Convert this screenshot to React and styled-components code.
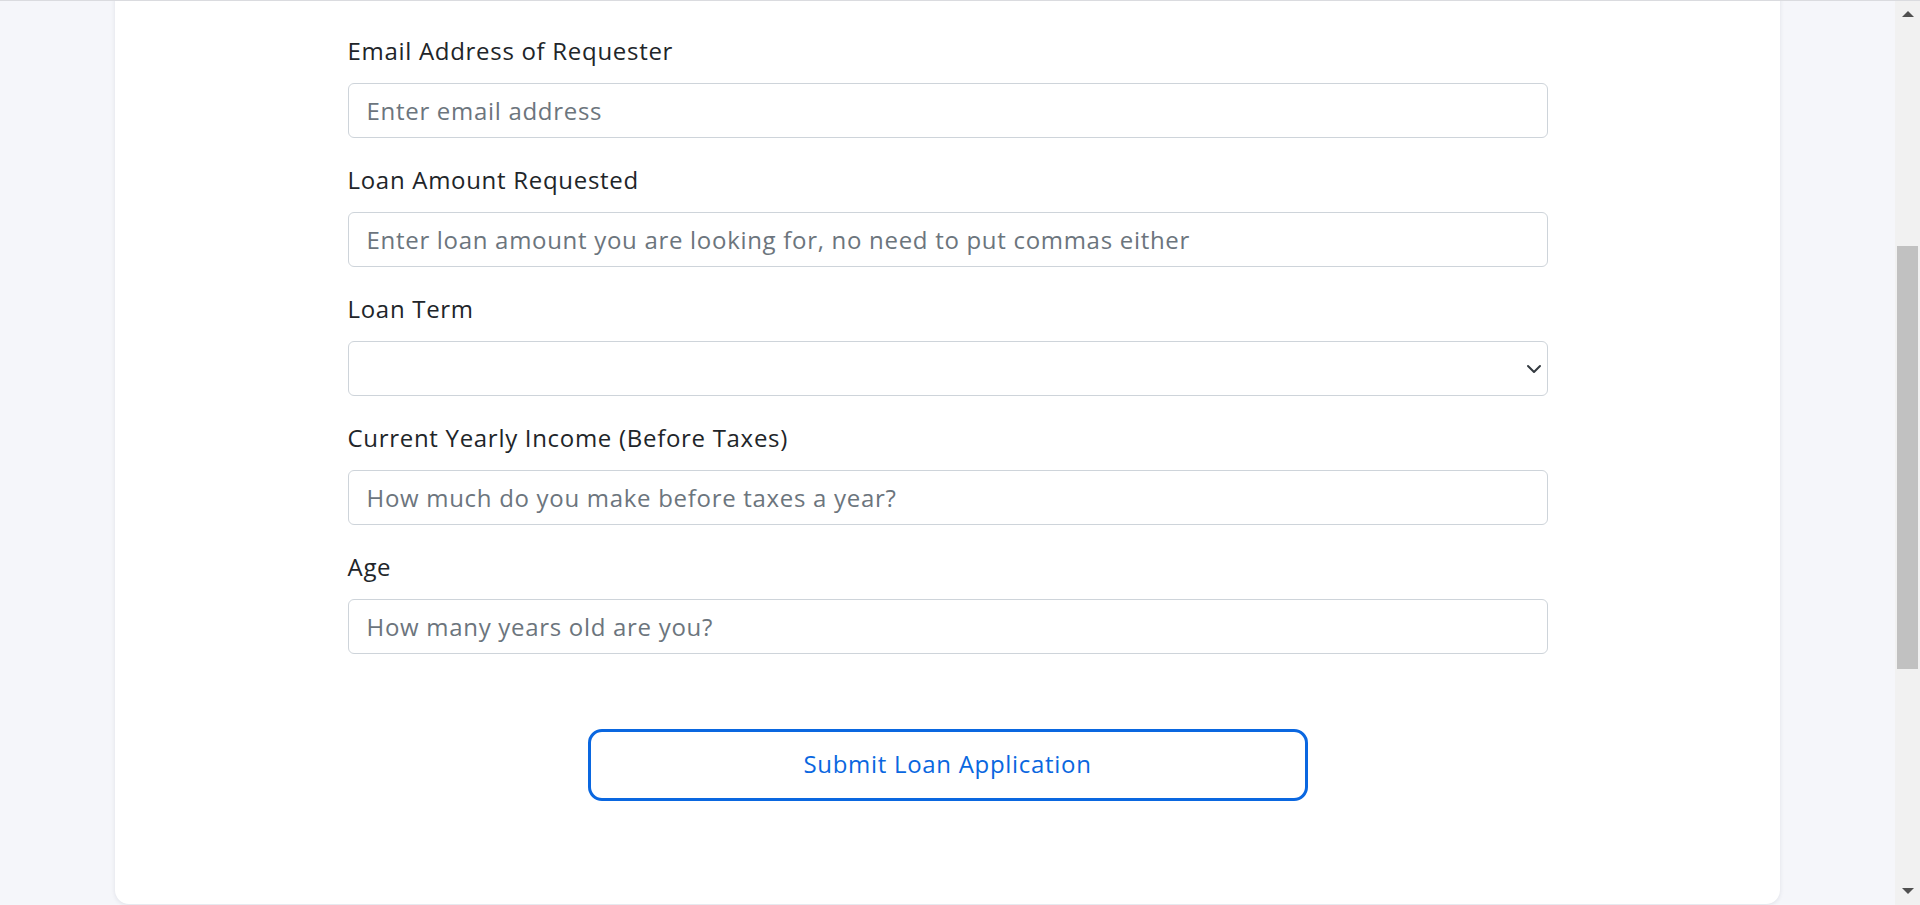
import styled, { createGlobalStyle } from "styled-components"

const FONT = `"Open Sans", "Liberation Sans", sans-serif`

const Global = createGlobalStyle`
  html, body {
    margin: 0;
    padding: 0;
    overflow: hidden;
  }
  body {
    font-family: ${FONT};
    background: #f5f6fa;
  }
  * {
    box-sizing: border-box;
  }
`

const Viewport = styled.div`
  display: flex;
  height: 905px;
  border-top: 1px solid #dadbdf;
  overflow: hidden;
`
const Main = styled.main`
  flex: 1;
  overflow: hidden;
  background: #f5f6fa;
  padding: 0 115px;
`
const Card = styled.section`
  margin-top: -60px;
  padding: 96px 0 103px;
  background: #fff;
  border-radius: 14px;
  box-shadow: 0 1px 4px rgba(30, 40, 70, 0.1);
`
const Form = styled.form`
  width: 1200px;
  margin: 0 auto;
  display: flex;
  flex-direction: column;
  align-items: center;
`
const Field = styled.div`
  width: 100%;
  margin-bottom: 28px;
`
const Label = styled.label`
  display: block;
  font-size: 24px;
  letter-spacing: 0.7px;
  line-height: 28px;
  color: #212529;
  margin-bottom: 18px;
`
const Input = styled.input`
  display: block;
  width: 100%;
  height: 55px;
  padding: 0 18px;
  font-family: ${FONT};
  font-size: 24px;
  letter-spacing: 0.7px;
  color: #212529;
  background: #fff;
  border: 1px solid #ced4da;
  border-radius: 6px;
  outline: none;
  &::placeholder {
    color: #6c757d;
  }
`
const SelectWrap = styled.div`
  position: relative;
`
const Select = styled.select`
  display: block;
  width: 100%;
  height: 55px;
  padding: 0 18px;
  font-family: ${FONT};
  font-size: 24px;
  background: #fff;
  border: 1px solid #ced4da;
  border-radius: 6px;
  appearance: none;
  outline: none;
`
const Chevron = styled.svg`
  position: absolute;
  right: 6px;
  top: 50%;
  width: 16px;
  height: 16px;
  margin-top: -8px;
  pointer-events: none;
`
const Submit = styled.button`
  width: 720px;
  height: 72px;
  margin-top: 47px;
  padding: 0 0 3px;
  background: #fff;
  border: 3px solid #0a67e0;
  border-radius: 14px;
  color: #0a67e0;
  font-family: ${FONT};
  font-size: 24px;
  letter-spacing: 0.7px;
  cursor: pointer;
`
const Scrollbar = styled.div`
  width: 25px;
  background: #f1f1f1;
  display: flex;
  flex-direction: column;
  align-items: center;
`
const Arrow = styled.div`
  width: 0;
  height: 0;
  border-left: 6px solid transparent;
  border-right: 6px solid transparent;
  ${(p) =>
    p.down
      ? "border-top: 6px solid #505050; margin-top: auto; margin-bottom: 11px;"
      : "border-bottom: 6px solid #505050; margin-top: 10px;"}
`
const Thumb = styled.div`
  width: 21px;
  height: 423px;
  margin-top: 229px;
  background: #c1c1c1;
`

const fields = [
  { label: "Email Address of Requester", placeholder: "Enter email address" },
  {
    label: "Loan Amount Requested",
    placeholder: "Enter loan amount you are looking for, no need to put commas either",
  },
  { label: "Loan Term", select: true },
  { label: "Current Yearly Income (Before Taxes)", placeholder: "How much do you make before taxes a year?" },
  { label: "Age", placeholder: "How many years old are you?" },
]

export default function App() {
  return (
    <>
      <Global />
      <Viewport>
        <Main>
          <Card>
            <Form onSubmit={(e) => e.preventDefault()}>
              {fields.map((f) => (
                <Field key={f.label}>
                  <Label>{f.label}</Label>
                  {f.select ? (
                    <SelectWrap>
                      <Select defaultValue="">
                        <option value=""></option>
                      </Select>
                      <Chevron viewBox="0 0 16 16" fill="none">
                        <path d="M2 5l6 6 6-6" stroke="#343a40" strokeWidth="2" strokeLinecap="round" strokeLinejoin="round" />
                      </Chevron>
                    </SelectWrap>
                  ) : (
                    <Input placeholder={f.placeholder} />
                  )}
                </Field>
              ))}
              <Submit type="submit">Submit Loan Application</Submit>
            </Form>
          </Card>
        </Main>
        <Scrollbar>
          <Arrow />
          <Thumb />
          <Arrow down />
        </Scrollbar>
      </Viewport>
    </>
  )
}
